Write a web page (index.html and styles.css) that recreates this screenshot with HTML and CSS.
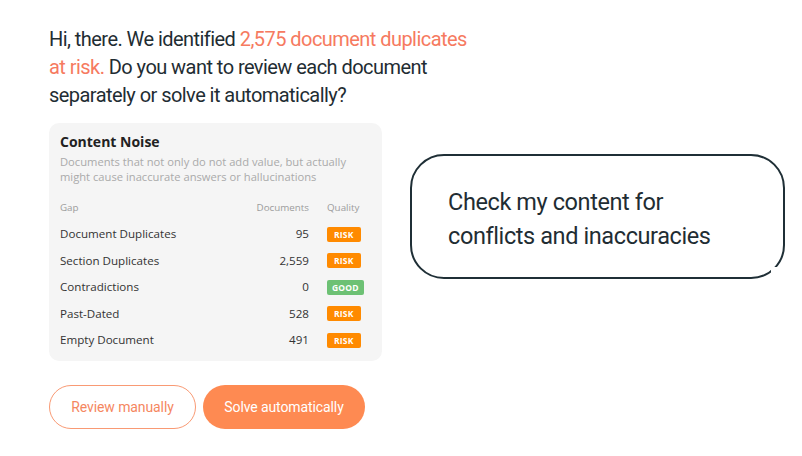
FILE: index.html
```html
<!DOCTYPE html>
<html lang="en">
<head>
  <meta charset="UTF-8">
  <meta name="viewport" content="width=device-width, initial-scale=1.0">
  <title>Content Noise</title>
  <link rel="stylesheet" href="styles.css">
</head>
<body>
  <div class="page">
    <div class="chat">
      <p class="intro">Hi, there. We identified <span class="hl">2,575 document duplicates<br>at risk.</span> Do you want to review each document<br>separately or solve it automatically?</p>

      <div class="card">
        <h2>Content Noise</h2>
        <p class="sub">Documents that not only do not add value, but actually might cause inaccurate answers or hallucinations</p>

        <div class="table">
          <div class="row head">
            <span>Gap</span><span class="num">Documents</span><span>Quality</span>
          </div>
          <div class="row">
            <span>Document Duplicates</span><span class="num">95</span><span><b class="tag risk">RISK</b></span>
          </div>
          <div class="row">
            <span>Section Duplicates</span><span class="num">2,559</span><span><b class="tag risk">RISK</b></span>
          </div>
          <div class="row">
            <span>Contradictions</span><span class="num">0</span><span><b class="tag good">GOOD</b></span>
          </div>
          <div class="row">
            <span>Past-Dated</span><span class="num">528</span><span><b class="tag risk">RISK</b></span>
          </div>
          <div class="row">
            <span>Empty Document</span><span class="num">491</span><span><b class="tag risk">RISK</b></span>
          </div>
        </div>
      </div>

      <div class="actions">
        <button class="btn outline">Review manually</button>
        <button class="btn solid">Solve automatically</button>
      </div>
    </div>

    <div class="bubble">
      <p>Check my content for<br>conflicts and inaccuracies</p>
    </div>
  </div>
</body>
</html>
```

FILE: styles.css
```css
body {
  margin: 0;
  background: #fff;
  font-family: Roboto, "Liberation Sans", sans-serif;
  color: #1f2d33;
}
.page {
  display: flex;
  align-items: flex-start;
  padding: 25px 0 0 49px;
}
.chat {
  width: 430px;
  flex-shrink: 0;
}
.intro {
  margin: 0;
  font-size: 20px;
  line-height: 28px;
  letter-spacing: -0.55px;
  white-space: nowrap;
}
.hl {
  color: #f67a60;
}
.card {
  margin-top: 14px;
  width: 311px;
  padding: 10px 11px 8px;
  background: #f5f5f5;
  border-radius: 10px;
  font-family: "Open Sans", sans-serif;
}
.card h2 {
  margin: 0;
  font-size: 14px;
  line-height: 18px;
  font-weight: 700;
  color: #222;
}
.sub {
  margin: 3px 0 0;
  font-size: 11.2px;
  line-height: 15px;
  color: #aaa;
}
.table {
  margin-top: 10px;
}
.row {
  display: grid;
  grid-template-columns: 1fr 70px 44px;
  column-gap: 18px;
  align-items: center;
  height: 26.5px;
  font-size: 11.6px;
  color: #333;
}
.row.head {
  font-size: 9.8px;
  color: #9c9c9c;
}
.num {
  text-align: right;
}
.tag {
  display: inline-block;
  padding: 0 5px;
  height: 15px;
  line-height: 15px;
  border-radius: 2px;
  font-size: 8.5px;
  font-weight: 700;
  color: #fff;
  letter-spacing: 0.2px;
}
.risk {
  background: #ff8a00;
  padding: 0 7px;
}
.good {
  background: #6dc174;
}
.actions {
  display: flex;
  gap: 7px;
  margin-top: 24px;
}
.btn {
  height: 44px;
  border-radius: 22px;
  font-family: Roboto, "Liberation Sans", sans-serif;
  font-size: 14px;
  letter-spacing: -0.1px;
  cursor: pointer;
}
.outline {
  width: 147px;
  background: #fff;
  border: 1px solid #f99a74;
  color: #f5875f;
}
.solid {
  width: 162px;
  background: #fe8a52;
  border: none;
  color: #fff;
}
.bubble {
  position: relative;
  flex-shrink: 0;
  margin: 129px 0 0 -69px;
  width: 335px;
  height: 116px;
  padding: 5px 0 0 36px;
  box-sizing: content-box;
  display: flex;
  align-items: center;
  border: 2px solid #1f2f36;
  border-radius: 34px;
}
.bubble::after {
  content: "";
  position: absolute;
  right: -4px;
  bottom: -4px;
  width: 16px;
  height: 14px;
  background: #fff;
}
.bubble p {
  margin: 0;
  font-size: 23.5px;
  line-height: 34px;
  letter-spacing: -0.4px;
}
```
